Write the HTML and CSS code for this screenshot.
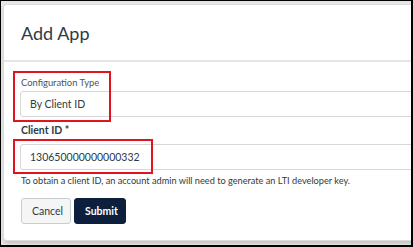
FILE: index.html
```html
<!DOCTYPE html>
<html>
<head>
<meta charset="utf-8">
<link rel="stylesheet" href="styles.css">
</head>
<body>
<div class="frame">
  <div class="modal">
    <div class="header"><h1 class="title">Add App</h1></div>
    <div class="content">
      <div class="group">
        <label class="label-small">Configuration Type</label>
        <div class="field">By Client ID</div>
      </div>
      <div class="group">
        <label class="label-bold">Client ID *</label>
        <div class="field">130650000000000332</div>
        <p class="help">To obtain a client ID, an account admin will need to generate an LTI developer key.</p>
      </div>
      <div class="actions">
        <button class="btn btn-cancel">Cancel</button>
        <button class="btn btn-submit">Submit</button>
      </div>
    </div>
  </div>
  <div class="mark mark-type"></div>
  <div class="mark mark-id"></div>
</div>
</body>
</html>
```
FILE: styles.css
```css
* { box-sizing: border-box; }
html, body { margin: 0; padding: 0; background: #fff; }
body { font-family: Lato, "Open Sans", "Liberation Sans", sans-serif; color: #2d3b45; }
.frame {
  position: relative;
  width: 413px;
  height: 247px;
  border-style: solid;
  border-color: #000;
  border-width: 1px 2px 2px 1px;
  background: #e6e6e6;
  overflow: hidden;
  padding: 4px 0 0 3px;
}
.modal {
  width: 640px;
  height: 235px;
  background: #fff;
  border-radius: 3px;
  box-shadow: 0 0 0 1px #dcdcdc, 0 3px 4px rgba(0,0,0,0.18);
}
.header {
  height: 57px;
  border-bottom: 2px solid #e5e5e5;
  display: flex;
  align-items: center;
  padding-left: 17px;
}
.title {
  margin: 0;
  font-size: 18px;
  font-weight: 400;
  color: #2d3b45;
}
.content { padding: 14px 0 0 16px; }
.group { display: flex; flex-direction: column; }
.label-small {
  font-size: 9.4px;
  line-height: 14px;
  color: #4a5660;
  padding-left: 1px;
  margin-bottom: 1px;
}
.label-bold {
  font-size: 10.5px;
  font-weight: 700;
  line-height: 14px;
  margin-top: 6px;
  margin-bottom: 7px;
  padding-left: 1px;
}
.field {
  height: 26px;
  border: 1px solid #d7d7d7;
  border-radius: 3px;
  padding-left: 9px;
  display: flex;
  align-items: center;
  font-size: 10.5px;
  color: #2d3b45;
}
.help {
  margin: 4px 0 0 1px;
  font-size: 9.2px;
  line-height: 13px;
  color: #2d3b45;
}
.actions { display: flex; gap: 3px; margin-top: 11px; padding-left: 1px; }
.btn {
  height: 26px;
  border-radius: 3px;
  font-family: inherit;
  font-size: 10.5px;
  padding: 0 10px;
  cursor: pointer;
}
.btn-cancel { width: 50px; background: #f5f5f5; border: 1px solid #c7cdd1; color: #2d3b45; }
.btn-submit { width: 52px; background: #0c1f3d; border: 1px solid #0c1f3d; color: #fff; font-weight: 700; }
.mark { position: absolute; border: 2px solid #e0141e; }
.mark-type { left: 12px; top: 70px; width: 98px; height: 51px; }
.mark-id { left: 12px; top: 138px; width: 140px; height: 35px; }
```
